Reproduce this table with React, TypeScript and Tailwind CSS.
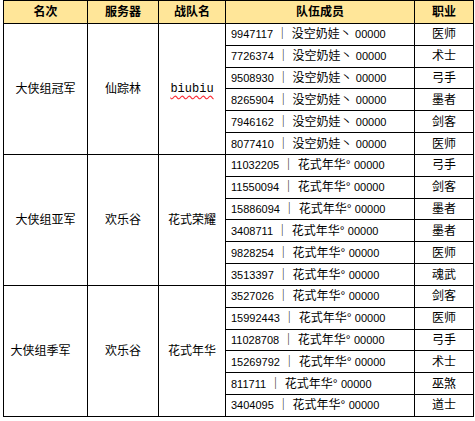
import React from 'react'

// ─── Data ────────────────────────────────────────────────────────────────────
type Member = { id: string; name: string; job: string }
type Team = { rank: string; server: string; team: string; members: Member[]; shift?: boolean }

const A = '没空奶娃丶'
const B = '花式年华°'

const teams: Team[] = [
  {
    rank: '大侠组冠军',
    server: '仙踪林',
    team: 'biubiu',
    members: [
      { id: '9947117', name: A, job: '医师' },
      { id: '7726374', name: A, job: '术士' },
      { id: '9508930', name: A, job: '弓手' },
      { id: '8265904', name: A, job: '墨者' },
      { id: '7946162', name: A, job: '剑客' },
      { id: '8077410', name: A, job: '医师' },
    ],
  },
  {
    rank: '大侠组亚军',
    server: '欢乐谷',
    team: '花式荣耀',
    members: [
      { id: '11032205', name: B, job: '弓手' },
      { id: '11550094', name: B, job: '剑客' },
      { id: '15886094', name: B, job: '墨者' },
      { id: '3408711', name: B, job: '墨者' },
      { id: '9828254', name: B, job: '医师' },
      { id: '3513397', name: B, job: '魂武' },
    ],
  },
  {
    rank: '大侠组季军',
    server: '欢乐谷',
    team: '花式年华',
    shift: true,
    members: [
      { id: '3527026', name: B, job: '剑客' },
      { id: '15992443', name: B, job: '医师' },
      { id: '11028708', name: B, job: '弓手' },
      { id: '15269792', name: B, job: '术士' },
      { id: '811711', name: B, job: '巫煞' },
      { id: '3404095', name: B, job: '道士' },
    ],
  },
]

const cell = 'border border-black p-0'
const head = 'border border-black p-0 bg-[#ffe699] font-bold text-center'

// ─── Component ───────────────────────────────────────────────────────────────
export default function App() {
  return (
    <div
      className="bg-white text-black text-[12px] leading-none pl-[3px]"
      style={{ fontFamily: '"Liberation Sans", "Noto Sans CJK SC", sans-serif' }}
    >
      <table className="border-collapse table-fixed w-[470px]">
        <colgroup>
          <col className="w-[84px]" />
          <col className="w-[71px]" />
          <col className="w-[67px]" />
          <col className="w-[189px]" />
          <col className="w-[59px]" />
        </colgroup>
        <thead>
          <tr className="h-[23px]">
            <th className={head}>名次</th>
            <th className={head}>服务器</th>
            <th className={head}>战队名</th>
            <th className={head}>队伍成员</th>
            <th className={head}>职业</th>
          </tr>
        </thead>
        <tbody>
          {teams.map(t =>
            t.members.map((m, i) => (
              <tr key={t.rank + m.id} className="h-[21.83px]">
                {i === 0 && (
                  <>
                    <td rowSpan={6} className={`${cell} text-center ${t.shift ? 'pr-[10px]' : ''}`}>
                      {t.rank}
                    </td>
                    <td rowSpan={6} className={`${cell} text-center`}>
                      {t.server}
                    </td>
                    <td rowSpan={6} className={`${cell} text-center`}>
                      {t.team === 'biubiu' ? (
                        <span
                          className="underline decoration-wavy decoration-red-500 underline-offset-2"
                          style={{ fontFamily: '"Liberation Mono", monospace' }}
                        >
                          biubiu
                        </span>
                      ) : (
                        t.team
                      )}
                    </td>
                  </>
                )}
                <td className={`${cell} pl-[5px] whitespace-nowrap`}>
                  <span className="text-[11px]">{m.id}</span> ｜ {m.name}{' '}
                  <span className="text-[11px]">00000</span>
                </td>
                <td className={`${cell} text-center`}>{m.job}</td>
              </tr>
            )),
          )}
        </tbody>
      </table>
    </div>
  )
}
